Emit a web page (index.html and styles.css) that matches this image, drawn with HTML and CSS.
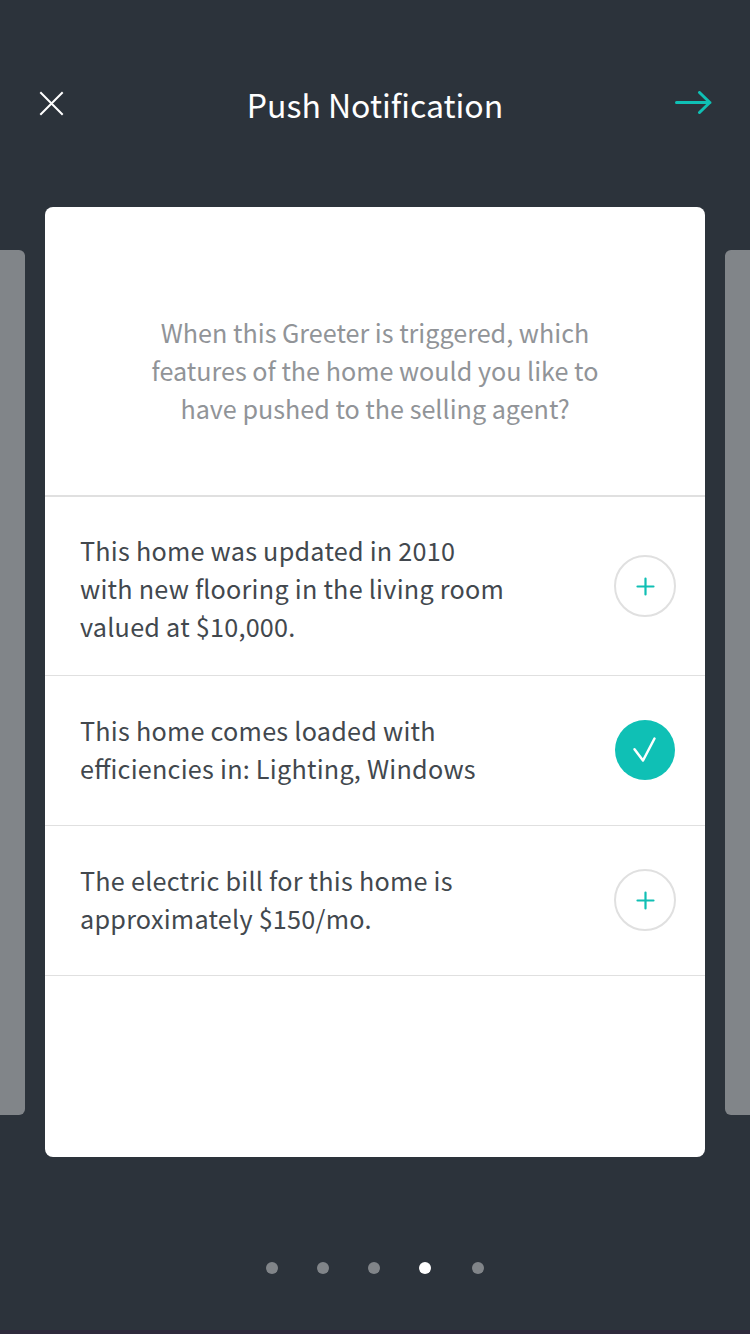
FILE: index.html
```html
<!DOCTYPE html>
<html lang="en">
<head>
<meta charset="utf-8">
<title>Push Notification</title>
<link rel="stylesheet" href="styles.css">
</head>
<body>
<div class="screen">
  <header class="bar">
    <button class="bar-btn" aria-label="Close"><svg width="26" height="26" viewBox="0 0 26 26"><path class="close-line" d="M2.300 1.300L24.700 23.700M24.700 1.300L2.300 23.700"/></svg></button>
    <h1 class="title">Push Notification</h1>
    <button class="bar-btn" aria-label="Next"><svg width="38" height="26" viewBox="0 0 38 26"><path class="next-line" d="M1.500 11.500H35M24.500 1.500L34.800 11.500L24.500 21.500"/></svg></button>
  </header>
  <main class="deck">
    <div class="peek peek-left"></div>
    <section class="card">
      <p class="question">When this Greeter is triggered, which<br>features of the home would you like to<br>have pushed to the selling agent?</p>
      <ul class="options">
        <li class="option option-tall">
          <p class="label">This home was updated in 2010<br>with new flooring in the living room<br>valued at $10,000.</p>
          <button class="toggle" aria-label="Add"><svg width="20" height="20" viewBox="0 0 20 20"><path class="plus" d="M10.500 2.500V18.500M2.500 10.500H18.500"/></svg></button>
        </li>
        <li class="option">
          <p class="label">This home comes loaded with<br>efficiencies in: Lighting, Windows</p>
          <button class="toggle toggle-on" aria-label="Selected"><svg width="26" height="28" viewBox="0 0 26 28"><path class="check" d="M2.500 13.200L11 24.500L22.500 2.500"/></svg></button>
        </li>
        <li class="option">
          <p class="label">The electric bill for this home is<br>approximately $150/mo.</p>
          <button class="toggle" aria-label="Add"><svg width="20" height="20" viewBox="0 0 20 20"><path class="plus" d="M10.500 2.500V18.500M2.500 10.500H18.500"/></svg></button>
        </li>
      </ul>
    </section>
    <div class="peek peek-right"></div>
  </main>
  <nav class="dots"><i class="dot"></i><i class="dot"></i><i class="dot"></i><i class="dot dot-on"></i><i class="dot dot-last"></i></nav>
</div>
</body>
</html>
```
FILE: styles.css
```css
* { box-sizing: border-box; margin: 0; padding: 0; }
body { background: #2c333b; font-family: "Noto Sans CJK SC", sans-serif; }
button { background: none; border: 0; display: flex; align-items: center; justify-content: center; }
svg { display: block; fill: none; }
.screen { width: 750px; height: 1334px; overflow: hidden; display: flex; flex-direction: column; border-bottom: 4px solid #2e2a3c; }
.bar { height: 207px; padding: 0 37px; display: flex; align-items: center; justify-content: space-between; }
.bar-btn { width: 38px; height: 26px; }
.bar-btn:first-child { justify-content: flex-start; padding-left: 1px; }
.title { color: #fff; font-size: 32px; font-weight: 400; line-height: 50px; }
.close-line { stroke: #fff; stroke-width: 2; }
.next-line { stroke: #0fc0b5; stroke-width: 3; stroke-linecap: round; stroke-linejoin: round; }
.deck { height: 950px; display: flex; justify-content: space-between; }
.peek { width: 25px; height: 865px; margin-top: 43px; background: #818589; }
.peek-left { border-radius: 0 6px 6px 0; }
.peek-right { border-radius: 6px 0 0 6px; }
.card { width: 660px; background: #fff; border-radius: 8px; }
.question { height: 290px; padding-top: 106px; border-bottom: 2px solid #e0e0e0; color: #919498; font-size: 25.15px; line-height: 38px; text-align: center; }
.options { list-style: none; }
.option { height: 150px; padding: 0 29px 2px 35px; border-bottom: 1px solid #e0e0e0; display: flex; align-items: center; justify-content: space-between; }
.label { color: #42484e; padding-bottom: 2px; font-size: 25.2px; line-height: 38px; letter-spacing: 0.24px; font-feature-settings: "liga" 1; }
.option-tall { height: 179px; padding-bottom: 0; }
.option-tall .label { padding: 4px 0 0; }
.toggle { width: 62px; height: 62px; border: 2px solid #e0e0e0; border-radius: 50%; }
.toggle-on { width: 60px; height: 60px; margin-right: 1px; border: 0; background: #0fc0b5; }
.plus { stroke: #10bfb4; stroke-width: 2.200; stroke-linecap: round; }
.check { stroke: #fff; stroke-width: 2.500; stroke-linecap: round; stroke-linejoin: round; }
.dots { display: flex; justify-content: center; gap: 39px; margin-top: 105px; }
.dot { width: 12px; height: 12px; border-radius: 50%; background: #818589; }
.dot-on { background: #fff; }
.dot-last { margin-left: 2px; }
```
